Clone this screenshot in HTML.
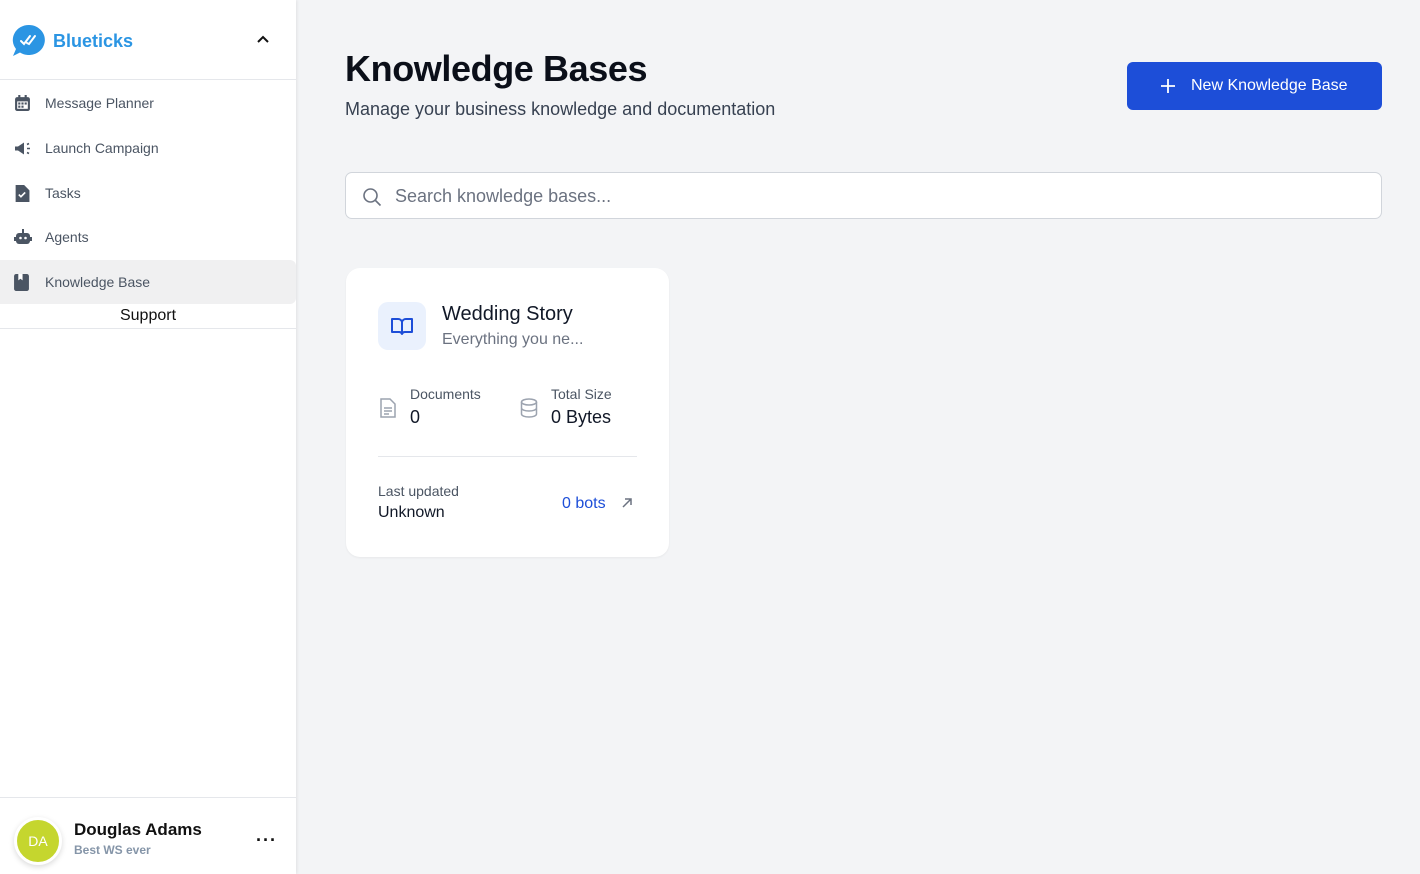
<!DOCTYPE html>
<html><head><meta charset="utf-8"><style>
*{box-sizing:border-box;margin:0;padding:0}
body{width:1420px;height:874px;background:#f3f4f6;font-family:"Liberation Sans",sans-serif;position:relative;overflow:hidden;color:#111827}
.sb{position:absolute;left:0;top:0;width:296px;height:874px;background:#fff;box-shadow:1px 0 3px rgba(0,0,0,.08)}
.logo{height:80px;border-bottom:1px solid #e5e7eb;position:relative}
.logo .t{position:absolute;left:53px;top:31px;font-weight:bold;font-size:18px;color:#2b95e3}
.nav{position:absolute;left:0;width:296px;height:44px;font-size:14px;color:#4b5563;display:flex;align-items:center;padding-left:45px}
.nav svg{position:absolute;left:14px;top:14px}
.act{background:#f0f0f1;border-radius:0 6px 6px 0}
.foot{position:absolute;left:0;bottom:0;width:296px;height:77px;border-top:1px solid #e5e7eb}
.av{position:absolute;left:14px;top:19px;width:48px;height:48px;border-radius:50%;background:#c5d62e;border:3px solid #fff;box-shadow:0 2px 6px rgba(0,0,0,.15);color:#fff;font-size:14px;text-align:center;line-height:42px}
h1{position:absolute;left:345px;top:48px;font-size:36px;font-weight:bold;color:#0b0f19;letter-spacing:-.4px}
.sub{position:absolute;left:345px;top:99px;font-size:18px;color:#374151}
.btn{position:absolute;left:1127px;top:62px;width:255px;height:48px;background:#1d4ed8;border-radius:6px;color:#fff;font-size:16px;display:flex;align-items:center;padding-left:64px}
.btn svg{position:absolute;left:33px;top:16px}
.search{position:absolute;left:345px;top:172px;width:1037px;height:47px;background:#fff;border:1px solid #d1d5db;border-radius:7px;font-size:18px;color:#6b7280;padding:13px 0 0 49px}
.search svg{position:absolute;left:16px;top:14px}
.card{position:absolute;left:346px;top:268px;width:323px;height:289px;background:#fff;border-radius:14px;box-shadow:0 1px 2px rgba(0,0,0,.05)}
.ib{position:absolute;left:32px;top:34px;width:48px;height:48px;border-radius:10px;background:#eaf1fd}
.a{position:absolute;white-space:nowrap}
</style></head><body>
<div class="sb">
 <div class="logo">
  <svg style="position:absolute;left:12px;top:24px" width="34" height="33" viewBox="0 0 34 33"><path d="M17 1a16 15 0 1 1-9 27.5L1 32l3-7A16 15 0 0 1 17 1z" fill="#2b95e3"/><path d="M9 17l3 3 6-8M15 19l2 1 6-8" stroke="#fff" stroke-width="2" fill="none" stroke-linecap="round"/></svg>
  <div class="t">Blueticks</div>
  <svg style="position:absolute;left:257px;top:35px" width="12" height="8" viewBox="0 0 12 8"><path d="M1 7l5-5 5 5" stroke="#111" stroke-width="2" fill="none"/></svg>
 </div>
 <div class="nav" style="top:81px"><svg width="17" height="17" viewBox="0 0 16 16"><rect x="1" y="2" width="14" height="13" rx="2" fill="#4b5563"/><rect x="3" y="6" width="10" height="7" fill="#fff"/><g fill="#4b5563"><rect x="4" y="7" width="2" height="2"/><rect x="7" y="7" width="2" height="2"/><rect x="10" y="7" width="2" height="2"/><rect x="4" y="10" width="2" height="2"/><rect x="7" y="10" width="2" height="2"/></g><rect x="4" y="0" width="2" height="4" fill="#4b5563"/><rect x="10" y="0" width="2" height="4" fill="#4b5563"/></svg>Message Planner</div>
 <div class="nav" style="top:126px"><svg width="18" height="17" viewBox="0 0 18 16"><path d="M1 6h3l6-4v12l-6-4H1z" fill="#4b5563"/><path d="M13 4l2-1M13 8h3M13 12l2 1" stroke="#4b5563" stroke-width="1.6"/></svg>Launch Campaign</div>
 <div class="nav" style="top:171px"><svg width="16" height="17" viewBox="0 0 14 16"><path d="M1 0h8l5 5v11H1z" fill="#4b5563"/><path d="M4 9l2 2 4-4" stroke="#fff" stroke-width="1.6" fill="none"/></svg>Tasks</div>
 <div class="nav" style="top:215px"><svg width="18" height="16" viewBox="0 0 18 16"><rect x="2" y="4" width="14" height="11" rx="3" fill="#4b5563"/><rect x="0" y="8" width="2" height="4" fill="#4b5563"/><rect x="16" y="8" width="2" height="4" fill="#4b5563"/><rect x="8" y="0" width="2" height="4" fill="#4b5563"/><circle cx="6.5" cy="9" r="1.3" fill="#fff"/><circle cx="11.5" cy="9" r="1.3" fill="#fff"/></svg>Agents</div>
 <div class="nav act" style="top:260px"><svg width="15" height="17" viewBox="0 0 14 16"><rect x="0" y="0" width="14" height="16" rx="2" fill="#4b5563"/><path d="M4 0h4v6l-2-1.5L4 6z" fill="#fff"/></svg>Knowledge Base</div>
 <div class="a" style="left:0;top:307px;width:296px;text-align:center;font-size:16px;color:#111">Support</div>
 <div class="a" style="left:0;top:328px;width:296px;border-top:1px solid #e5e7eb"></div>
 <div class="foot">
  <div class="av">DA</div>
  <div class="a" style="left:74px;top:22px;font-size:17px;font-weight:bold;color:#111">Douglas Adams</div>
  <div class="a" style="left:74px;top:45px;font-size:12px;font-weight:bold;color:#8595a8">Best WS ever</div>
  <div class="a" style="left:256px;top:32px;font-size:18px;font-weight:bold;letter-spacing:1px;color:#111">···</div>
 </div>
</div>
<h1>Knowledge Bases</h1>
<div class="sub">Manage your business knowledge and documentation</div>
<div class="btn"><svg width="16" height="16" viewBox="0 0 16 16"><path d="M8 1v14M1 8h14" stroke="#fff" stroke-width="1.8"/></svg>New Knowledge Base</div>
<div class="search"><svg width="20" height="20" viewBox="0 0 20 20"><circle cx="8.5" cy="8.5" r="6.5" stroke="#6b7280" stroke-width="1.6" fill="none"/><path d="M13.5 13.5l5 5" stroke="#6b7280" stroke-width="1.6"/></svg>Search knowledge bases...</div>
<div class="card">
 <div class="ib"><svg style="position:absolute;left:12px;top:12px" width="24" height="24" viewBox="0 0 24 24"><path d="M2 5h6a4 4 0 0 1 4 3v12a3 3 0 0 0-3-2H2zM22 5h-6a4 4 0 0 0-4 3v12a3 3 0 0 1 3-2h7z" stroke="#1d4ed8" stroke-width="2" fill="none" stroke-linejoin="round"/></svg></div>
 <div class="a" style="left:96px;top:35px;font-size:20px;color:#111827">Wedding Story</div>
 <div class="a" style="left:96px;top:63px;font-size:16px;color:#6b7280">Everything you ne...</div>
 <svg style="position:absolute;left:33px;top:130px" width="18" height="20" viewBox="0 0 18 20"><path d="M2 1h9l5 5v13H2z" stroke="#9ca3af" stroke-width="1.5" fill="none"/><path d="M5 10h8M5 13h8M5 16h5" stroke="#9ca3af" stroke-width="1.5"/></svg>
 <div class="a" style="left:64px;top:118px;font-size:14px;color:#4b5563">Documents</div>
 <div class="a" style="left:64px;top:139px;font-size:18px;color:#111827">0</div>
 <svg style="position:absolute;left:174px;top:130px" width="18" height="20" viewBox="0 0 18 20"><ellipse cx="9" cy="4" rx="7.5" ry="3" stroke="#9ca3af" stroke-width="1.5" fill="none"/><path d="M1.5 4v12c0 1.7 3.4 3 7.5 3s7.5-1.3 7.5-3V4M1.5 10c0 1.7 3.4 3 7.5 3s7.5-1.3 7.5-3" stroke="#9ca3af" stroke-width="1.5" fill="none"/></svg>
 <div class="a" style="left:205px;top:118px;font-size:14px;color:#4b5563">Total Size</div>
 <div class="a" style="left:205px;top:139px;font-size:18px;color:#111827">0 Bytes</div>
 <div class="a" style="left:32px;top:188px;width:259px;border-top:1px solid #e5e7eb"></div>
 <div class="a" style="left:32px;top:215px;font-size:14px;color:#4b5563">Last updated</div>
 <div class="a" style="left:32px;top:236px;font-size:16px;color:#111827">Unknown</div>
 <div class="a" style="left:216px;top:227px;font-size:16px;color:#1d4ed8">0 bots</div>
 <svg style="position:absolute;left:275px;top:229px" width="12" height="12" viewBox="0 0 12 12"><path d="M2 10l8-8M4 2h6v6" stroke="#6b7280" stroke-width="1.5" fill="none"/></svg>
</div>
</body></html>
